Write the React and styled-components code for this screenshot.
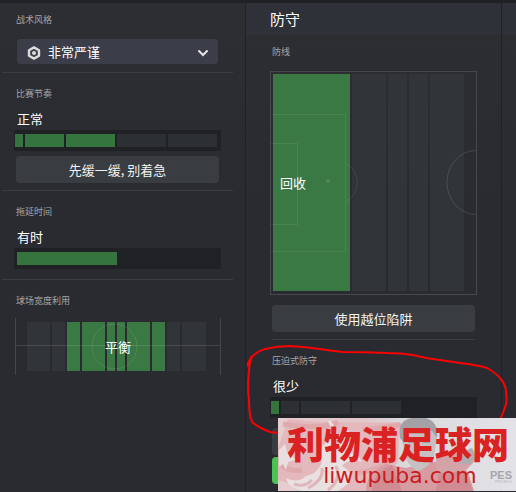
import React from 'react';
import styled, { createGlobalStyle } from 'styled-components';

const GlobalStyle = createGlobalStyle`
  * {
    box-sizing: border-box;
  }

  body {
    margin: 0;
    background: #2a2b30;
    color: #fff;
    font-family: 'Noto Sans CJK SC', 'Noto Sans', sans-serif;
    font-size: 13px;
  }
`;

const Page = styled.main`
  position: relative;
  min-height: 100vh;
  overflow: hidden;
  display: grid;
  grid-template-columns: 245fr 256fr 15fr;
  border-top: 3px solid #202125;
`;

const Column = styled.section`
  min-width: 0;
  background: linear-gradient(#2c2e32, #2a2b31 40%);

  & + & {
    border-left: 1px solid #202125;
  }
`;

const ColumnHeader = styled.h2`
  height: 32px;
  margin: 0;
  padding: 0 24px;
  background: #2f3139;
  font-size: 15px;
  font-weight: 400;
  line-height: 32px;
`;

const ColumnBody = styled.div`
  padding: ${props => props.$padding};
`;

const Divider = styled.hr`
  height: 1px;
  margin: ${props => props.$top}px ${props => props.$inset}px 15px;
  border: 0;
  background: #3c3d42;
`;

const Label = styled.label`
  display: block;
  padding-left: 2px;
  color: #a6a6a7;
  font-size: 9px;
  line-height: 12px;
`;

const Value = styled.div`
  margin: 10px 0 2px;
  padding-left: 3px;
  line-height: 18px;
`;

const SelectBox = styled.div`
  position: relative;
  margin: 13px 3px 0;
`;

const Select = styled.select`
  display: block;
  width: 100%;
  height: 25px;
  padding: 0 28px 0 31px;
  appearance: none;
  border: 0;
  border-radius: 3px;
  background: #3b3d49;
  color: #fff;
  font: inherit;
`;

const SelectIcon = styled.svg`
  position: absolute;
  top: 7px;
  ${props => props.$side}: 10px;
  pointer-events: none;
`;

const Button = styled.button`
  display: block;
  width: calc(100% - 4px);
  height: 27px;
  margin: ${props => props.$top}px 2px 0;
  padding: 0;
  border: 0;
  border-radius: 4px;
  background: ${props => (props.$primary ? '#4bc353' : '#393d41')};
  color: #f2f2f2;
  font: inherit;
`;

const Track = styled.div`
  display: flex;
  gap: 2px;
  height: 21px;
  padding: 4px 4px 4px ${props => (props.$inset ? 3 : 1)}px;
  background: #202124;
`;

const Segment = styled.div`
  flex: ${props => props.$size} 1 0;
  background: ${props => props.$color};
`;

const WidthPitch = styled.div`
  position: relative;
  display: flex;
  gap: 2px;
  height: 57px;
  margin: 11px 0 0 1px;
  padding: 4px 14px 4px 11px;
  border: solid #45464c;
  border-width: 0 1px;
`;

const DepthPitch = styled.div`
  position: relative;
  display: flex;
  gap: 2px;
  height: 224px;
  margin-top: 13px;
  padding: 2px 12px 3px 2px;
  border: 1px solid #47484d;
`;

const PitchLines = styled.svg`
  position: absolute;
  inset: 0;
  width: 100%;
  height: 100%;
  fill: none;
  stroke: #fff;
`;

const PitchText = styled.span`
  position: absolute;
  top: 50%;
  left: ${props => props.$left};
  transform: translate(${props => props.$shift}, -50%);
  line-height: 18px;
`;

const Annotation = styled.svg`
  position: absolute;
  top: 339px;
  right: 0;
  pointer-events: none;
`;

const Banner = styled.div`
  position: absolute;
  top: 415px;
  right: 0;
  width: 238px;
  height: 73px;
  padding-top: 6px;
  text-align: center;
  white-space: nowrap;
`;

const BannerArt = styled.svg`
  position: absolute;
  inset: 0;
`;

const BannerTitle = styled.div`
  position: relative;
  padding-left: 2px;
  color: #db2222;
  font-size: 37px;
  font-weight: 900;
  line-height: 38px;
`;

const BannerSite = styled.div`
  position: relative;
  padding-left: 6px;
  color: #c91c20;
  font-family: 'DejaVu Sans', sans-serif;
  font-size: 22px;
  line-height: 28px;
`;

const GREEN = '#35743e';
const PITCH_GREEN = '#3a7944';
const EMPTY = '#2d3033';
const PITCH_EMPTY = '#313439';

const TEMPO = [[8, GREEN], [39, GREEN], [49, GREEN], [49, EMPTY], [49, EMPTY]];
const WASTING = [[100, GREEN], [98, 'transparent']];
const PRESSING = [[8, GREEN], [18, EMPTY], [49, EMPTY], [49, EMPTY], [70, 'transparent']];
const WIDTH = [
  [23, PITCH_EMPTY],
  [13, PITCH_EMPTY],
  [13, PITCH_GREEN],
  [23, PITCH_GREEN],
  [8, PITCH_GREEN],
  [8, PITCH_GREEN],
  [23, PITCH_GREEN],
  [13, PITCH_GREEN],
  [13, PITCH_EMPTY],
  [24, PITCH_EMPTY],
];
const LINE = [
  [77, PITCH_GREEN],
  [34, PITCH_EMPTY],
  [19, PITCH_EMPTY],
  [19, PITCH_EMPTY],
  [34, PITCH_EMPTY],
];

const Segments = ({ items }) => items.map(([size, color], i) => (
  <Segment key={i} $size={size} $color={color} />
));

const StyleSelect = () => (
  <SelectBox>
    <Select id="style" defaultValue="cautious">
      <option value="cautious">非常严谨</option>
    </Select>
    <SelectIcon $side="left" width="14" height="14" viewBox="0 0 14 14">
      <path d="M7 1.4 12 4.2V9.8L7 12.6 2 9.8V4.2Z" fill="none" stroke="#dcdcdc" strokeWidth="2.4" strokeLinejoin="round" />
      <circle cx="7" cy="7" r="2" fill="#dcdcdc" />
    </SelectIcon>
    <SelectIcon $side="right" width="10" height="14" viewBox="0 0 10 14">
      <path d="M1 5l4 4 4-4" fill="none" stroke="#e4e4e4" strokeWidth="2" strokeLinecap="round" />
    </SelectIcon>
  </SelectBox>
);

const SiteBanner = () => (
  <Banner>
    <BannerArt width="238" height="73" viewBox="0 0 238 73">
      <defs>
        <linearGradient id="banner">
          <stop offset="0" stopColor="#e6cdd0" />
          <stop offset="0.35" stopColor="#e0c6c9" />
          <stop offset="0.5" stopColor="#dad8db" />
          <stop offset="1" stopColor="#e3e2e7" />
        </linearGradient>
      </defs>
      <rect width="238" height="73" fill="url(#banner)" />
      {/* flag */}
      <path d="M10 1Q50 6 122 4L120 44 96 73H40L0 62V30Z" fill="#e3b9bd" />
      <path d="M5 6Q45 12 60 4M85 12l38-5M78 55q20-2 34-12M4 48q10 6 20 4" fill="none" stroke="#e0a9ae" strokeWidth="5" />
      <path d="M52 2Q62 14 58 26Q70 18 68 8Q78 24 66 34Q80 34 84 44Q70 40 64 48Q76 54 70 66L60 73H26Q10 70 8 60Q20 66 28 58Q40 56 44 44Q38 30 52 22Q56 12 50 4Z" fill="#e9e0e2" />
      <path d="M30 70Q46 62 44 50M50 72Q64 62 58 48M16 66q10 4 18-4" fill="none" stroke="#dfb6ba" strokeWidth="3" />
      <path d="M1 32l6-6 2 8 7-6-2 10 4 4-8 2-2 8-3-6-4 2Z" fill="#e9dfe1" />
      {/* shirt and shoulders */}
      <path d="M88 73Q88 54 108 46L128 50 152 44Q178 42 190 54L196 73Z" fill="#d79ca1" />
      <path d="M94 73q2-20 20-26l10 26ZM158 73l4-27q18-2 27 10l6 17Z" fill="#d18b92" />
      {/* player */}
      <path d="M123 14Q125 2 143 2Q160 4 159 18L156 40Q148 52 139 53Q128 47 126 32Z" fill="#c6c0c3" />
      <path d="M122 20Q119 2 134 0H148Q161 4 159 20L154 13Q138 7 128 15L126 25Z" fill="#a3a1a5" />
      <path d="M130 24h7M145 24h7M136 40q6 3 11 0" stroke="#a59fa3" strokeWidth="2" />
      <path d="M158 38l22-8 14 4 4 8-10 10-22 4-8-4Z" fill="#d3a3a8" />
      <path d="M182 46q2-14 12-16 6 8-2 16Z" fill="#b0adb1" />
      <text x="212" y="61" fill="#a5a5aa" fontFamily="Liberation Sans" fontWeight="700" fontSize="11">PES</text>
      <text x="217" y="65" fill="#b6b5ba" fontFamily="Liberation Sans" fontSize="4">PROEVO</text>
    </BannerArt>
    <BannerTitle>利物浦足球网</BannerTitle>
    <BannerSite>liwupuba.com</BannerSite>
  </Banner>
);

export default () => (
  <>
    <GlobalStyle />
    <Page>
      <Column>
        <ColumnBody $padding="11px 24px 0 14px">
          <Label htmlFor="style">战术风格</Label>
          <StyleSelect />
          <Divider $top={8} $inset={-12} />

          <Label as="div">比赛节奏</Label>
          <Value>正常</Value>
          <Track>
            <Segments items={TEMPO} />
          </Track>
          <Button $top={5}>先缓一缓, 别着急</Button>
          <Divider $top={7} $inset={-12} />

          <Label as="div">拖延时间</Label>
          <Value>有时</Value>
          <Track $inset>
            <Segments items={WASTING} />
          </Track>
          <Divider $top={10} $inset={-12} />

          <Label as="div">球场宽度利用</Label>
          <WidthPitch>
            <Segments items={WIDTH} />
            <PitchLines viewBox="0 0 204 57" preserveAspectRatio="none">
              <path d="M0 27.5H204" strokeOpacity="0.12" />
              <circle cx="98.5" cy="28.5" r="22.5" strokeOpacity="0.1" />
            </PitchLines>
            <PitchText $left="50%" $shift="-50%">平衡</PitchText>
          </WidthPitch>
        </ColumnBody>
      </Column>

      <Column>
        <ColumnHeader>防守</ColumnHeader>
        <ColumnBody $padding="11px 24px 0">
          <Label as="div">防线</Label>
          <DepthPitch>
            <Segments items={LINE} />
            <PitchLines viewBox="0 0 205 222" preserveAspectRatio="none" strokeOpacity="0.08">
              <path d="M0 42.5H74.5V179.5H0M0 71.5H26.5V152.5H0M74.5 91A22 22 0 0 1 74.5 130" />
              <path d="M205 78.5A29 32 0 0 0 205 142.5" strokeOpacity="0.12" />
              <circle cx="57" cy="109" r="2" fill="#fff" fillOpacity="0.1" stroke="none" />
            </PitchLines>
            <PitchText $left="9px" $shift="0">回收</PitchText>
          </DepthPitch>
          <Button $top={10}>使用越位陷阱</Button>
          <Divider $top={7} $inset={2} />

          <Label as="div">压迫式防守</Label>
          <Value>很少</Value>
          <Track>
            <Segments items={PRESSING} />
          </Track>
          <Button $top={10} />
          <Button $top={2} $primary />
        </ColumnBody>
      </Column>

      <Column>
        <ColumnHeader />
      </Column>

      <Annotation width="270" height="95" viewBox="0 0 270 95">
        <path
          d="M6 15 2 24Q1 21 5 16Q11 9 19 7Q31 4 44 4Q60 5 74 7Q86 9 97 10Q120 10 141 11Q155 11 167 13Q183 17 194 18L214 21Q231 23 241 26Q250 31 254 36Q260 43 260 50Q262 60 258 68L254 78M5 15Q3 25 3 29Q1 45 3 57Q3 76 7 81Q15 87 24 90L33 91"
          fill="none"
          stroke="#fa0202"
          strokeWidth="2"
          strokeLinecap="round"
          strokeLinejoin="round"
        />
      </Annotation>
      <SiteBanner />
    </Page>
  </>
);
